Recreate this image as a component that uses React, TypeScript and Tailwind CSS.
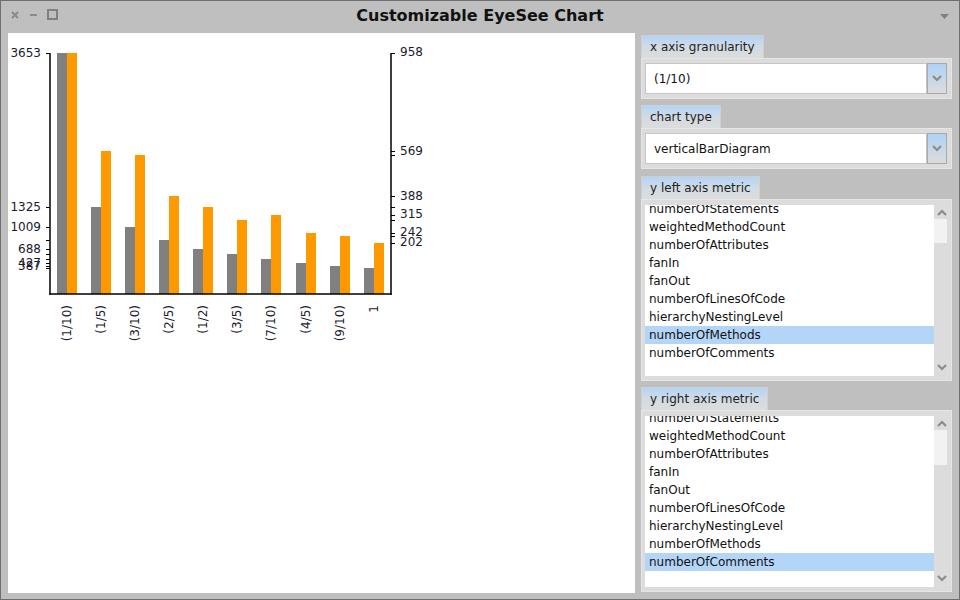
import React from "react";

const grayTops = [53, 207, 227, 240, 249, 254, 259, 263, 266, 268];
const orangeTops = [53, 151, 155, 196, 207, 220, 215, 233, 236, 243];
const xs = [57, 91, 125, 159, 193, 227, 261, 296, 330, 364];
const xl = ["(1/10)", "(1/5)", "(3/10)", "(2/5)", "(1/2)", "(3/5)", "(7/10)", "(4/5)", "(9/10)", "1"];
const leftLabels: [string, number][] = [
  ["3653", 53],
  ["1325", 207],
  ["1009", 227],
  ["688", 249],
  ["427", 263],
  ["387", 266],
];
const rightLabels: [string, number][] = [
  ["958", 52],
  ["569", 151],
  ["388", 196],
  ["315", 214],
  ["242", 232],
  ["202", 242],
];
const metrics = [
  "numberOfStatements",
  "weightedMethodCount",
  "numberOfAttributes",
  "fanIn",
  "fanOut",
  "numberOfLinesOfCode",
  "hierarchyNestingLevel",
  "numberOfMethods",
  "numberOfComments",
];

const BASE = 294;

function Chart() {
  return (
    <svg width={627} height={560} viewBox="8 33 627 560" style={{ fontFamily: "'DejaVu Sans', sans-serif" }}>
      {xs.map((x, i) => (
        <g key={i}>
          <rect x={x} y={grayTops[i]} width={10} height={BASE - grayTops[i]} fill="#808080" />
          <rect x={x + 10} y={orangeTops[i]} width={10} height={BASE - orangeTops[i]} fill="#ff9900" />
        </g>
      ))}
      <line x1={50} y1={53} x2={50} y2={BASE + 0.75} stroke="#000" strokeWidth={1.5} />
      <line x1={391} y1={53} x2={391} y2={BASE + 0.75} stroke="#000" strokeWidth={1.5} />
      <line x1={49.25} y1={BASE} x2={391.75} y2={BASE} stroke="#000" strokeWidth={1.5} />
      {grayTops.map((y, i) => (
        <line key={"lt" + i} x1={46} y1={y + 0.5} x2={50} y2={y + 0.5} stroke="#000" strokeWidth={1} />
      ))}
      {orangeTops.map((y, i) => (
        <line key={"rt" + i} x1={391} y1={y + 0.5} x2={395} y2={y + 0.5} stroke="#000" strokeWidth={1} />
      ))}
      {leftLabels.map(([t, y]) => (
        <text key={"ll" + t} x={41} y={y} dy="0.36em" textAnchor="end" fontSize={12} fill="#1a1a2e">
          {t}
        </text>
      ))}
      {rightLabels.map(([t, y]) => (
        <text key={"rl" + t} x={400} y={y} dy="0.36em" textAnchor="start" fontSize={12} fill="#1a1a2e">
          {t}
        </text>
      ))}
      {xs.map((x, i) => (
        <text
          key={"xl" + i}
          x={x + 10}
          y={305}
          dy="0.36em"
          textAnchor="end"
          fontSize={12}
          fill="#1a1a2e"
          transform={`rotate(-90 ${x + 10} 305)`}
        >
          {xl[i]}
        </text>
      ))}
    </svg>
  );
}

function Chevron({ up = false }: { up?: boolean }) {
  return (
    <svg width={10} height={7} viewBox="0 0 10 7">
      <path d={up ? "M1 6 L5 2 L9 6" : "M1 1 L5 5 L9 1"} fill="none" stroke="#8c8c8c" strokeWidth={2.2} />
    </svg>
  );
}

function Tab({ label }: { label: string }) {
  return (
    <div className="flex">
      <div className="h-[23px] px-[8px] flex items-center text-[12px] text-[#222] bg-linear-to-b from-[#b3d4f6] via-[#d2dbe4] to-[#dcdcdc] border border-b-0 border-[#d0d0d0]">
        {label}
      </div>
    </div>
  );
}

function Combo({ value }: { value: string }) {
  return (
    <div className="h-[41px] bg-[#dcdcdc] border border-[#e6e6e6] pl-[3px] pr-[4px] pt-[4px] pb-[4px] flex">
      <div className="flex-1 bg-white border border-[#c6c6c6] flex items-center pl-[8px] text-[12px] text-[#111]">
        {value}
      </div>
      <div className="w-[20px] bg-linear-to-b from-[#aed2f7] to-[#dcdcdc] border border-[#a9a9a9] flex items-center justify-center">
        <Chevron />
      </div>
    </div>
  );
}

function ListPanel({ selected, offset, thumbTop, thumbH }: { selected: number; offset: string; thumbTop: string; thumbH: string }) {
  return (
    <div className="h-[182px] bg-[#dcdcdc] border border-[#e6e6e6] pl-[3px] pr-[3px] pt-[5px] pb-[4px] flex">
      <div className="flex-1 bg-white overflow-hidden">
        <div className={offset}>
          {metrics.map((m, i) => (
            <div
              key={m}
              className={
                "h-[18px] flex items-center pl-[4px] text-[12px] text-[#111] " + (i === selected ? "bg-[#b3d5f7]" : "")
              }
            >
              {m}
            </div>
          ))}
        </div>
      </div>
      <div className="w-[14px] flex flex-col items-center">
        <div className="h-[14px] flex items-center pl-[1px]">
          <Chevron up />
        </div>
        <div className={"w-[13px] bg-[#f2f2f2] self-start " + thumbTop + " " + thumbH} />
        <div className="flex-1" />
        <div className="h-[12px] flex items-start pl-[1px]">
          <Chevron />
        </div>
      </div>
    </div>
  );
}

export default function App() {
  return (
    <div
      className="w-[960px] h-[600px] bg-[#bfbfbf] border border-[#707070] flex flex-col overflow-hidden"
      style={{ fontFamily: "'DejaVu Sans', sans-serif" }}
    >
      <div className="h-[32px] flex items-center shrink-0">
        <div className="w-[120px] flex items-center pl-[10px] gap-[0px]">
          <svg width={60} height={32} viewBox="0 0 60 32">
            <path d="M1 11 L7 17 M7 11 L1 17" stroke="#8a8a8a" strokeWidth={2} />
            <path d="M19 14 L26 14" stroke="#8a8a8a" strokeWidth={2} />
            <rect x={37} y={9} width={9} height={9} fill="none" stroke="#808080" strokeWidth={2} />
          </svg>
        </div>
        <div className="flex-1 text-center text-[16px] font-bold text-[#111] leading-none pb-[2px]">
          Customizable EyeSee Chart
        </div>
        <div className="w-[120px] flex justify-end pr-[10px]">
          <svg width={9} height={6} viewBox="0 0 9 6">
            <path d="M0 0 L9 0 L4.5 5 Z" fill="#808080" />
          </svg>
        </div>
      </div>
      <div className="flex flex-1 min-h-0 pl-[7px] pb-[6px]">
        <div className="w-[627px] bg-white overflow-hidden">
          <Chart />
        </div>
        <div className="flex-1 flex flex-col pl-[6px] pr-[7px] pt-[2px]">
          <Tab label="x axis granularity" />
          <Combo value="(1/10)" />
          <div className="h-[6px]" />
          <Tab label="chart type" />
          <Combo value="verticalBarDiagram" />
          <div className="h-[7px]" />
          <Tab label="y left axis metric" />
          <ListPanel selected={7} offset="-mt-[5px]" thumbTop="mt-[0px]" thumbH="h-[24px]" />
          <div className="h-[6px]" />
          <Tab label="y right axis metric" />
          <ListPanel selected={8} offset="-mt-[7px]" thumbTop="mt-[0px]" thumbH="h-[35px]" />
        </div>
      </div>
    </div>
  );
}
